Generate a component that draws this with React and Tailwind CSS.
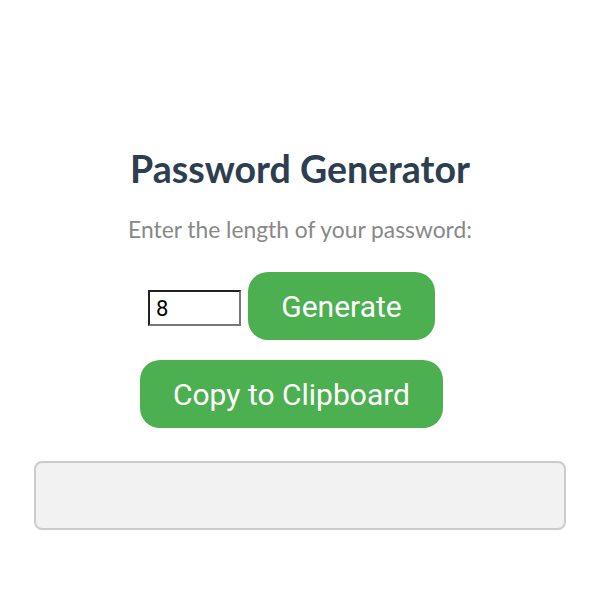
export default function App() {
  return (
    <div className="w-[600px] h-[600px] bg-white flex flex-col items-center pt-[145px]">
      <h1 className="text-[37.5px] leading-[48px] font-bold text-[#2c3e50] font-['Lato',sans-serif]">
        Password Generator
      </h1>
      <p className="mt-[22px] text-[22.8px] leading-[28px] text-[#888888] font-['Lato',sans-serif]">
        Enter the length of your password:
      </p>
      <div className="mt-[29px] mr-[17px] flex items-center gap-[7px]">
        <input
          type="number"
          defaultValue={8}
          className="w-[93px] h-[36px] mt-[4px] px-[6px] border-2 border-t-[#222] border-l-[#222] border-b-[#777] border-r-[#777] text-[22px] text-black font-['Roboto',sans-serif] bg-white"
        />
        <button className="w-[187px] h-[68px] rounded-[20px] bg-[#4caf50] text-white text-[30px] font-['Roboto',sans-serif]">
          Generate
        </button>
      </div>
      <button className="mt-[20px] mr-[17px] w-[303px] h-[68px] rounded-[20px] bg-[#4caf50] text-white text-[30px] font-['Roboto',sans-serif]">
        Copy to Clipboard
      </button>
      <div className="mt-[33px] w-[532px] h-[69px] rounded-[8px] bg-[#f2f2f2] border-2 border-[#cccccc]" />
    </div>
  )
}
